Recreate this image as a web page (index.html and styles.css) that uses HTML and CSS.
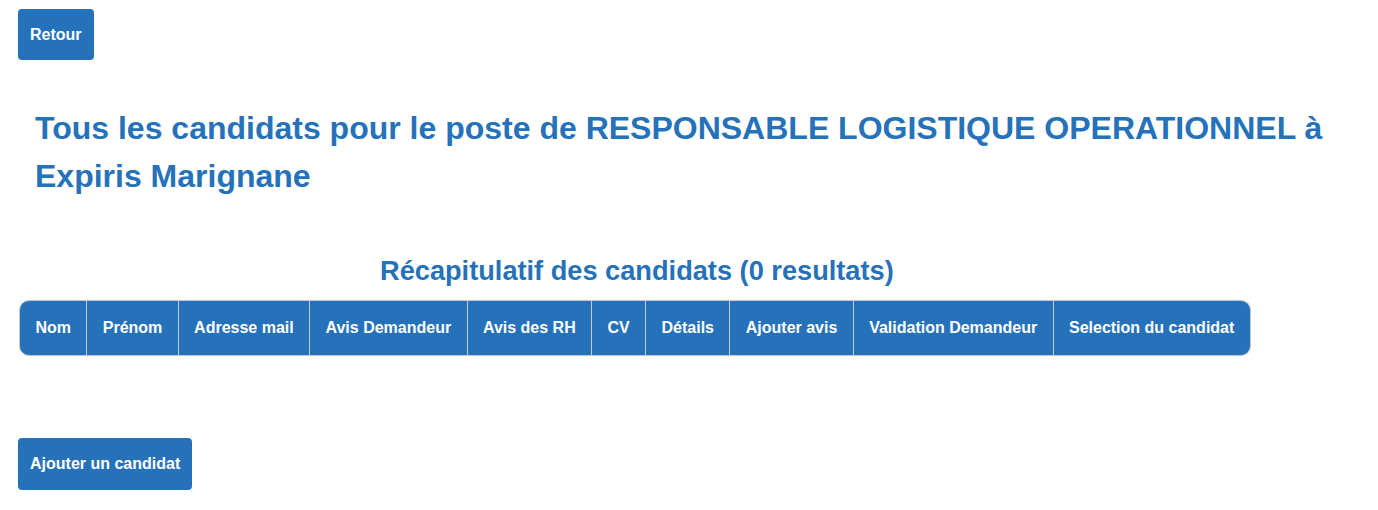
FILE: index.html
```html
<!DOCTYPE html>
<html lang="fr">
<head>
<meta charset="utf-8">
<title>Candidats</title>
<link rel="stylesheet" href="styles.css">
</head>
<body>
<div class="page">
  <div class="top"><button class="btn">Retour</button></div>
  <h1 class="title">Tous les candidats pour le poste de RESPONSABLE LOGISTIQUE OPERATIONNEL à Expiris Marignane</h1>
  <div class="table-wrap">
    <table class="recap">
      <caption>Récapitulatif des candidats (0 resultats)</caption>
      <thead>
        <tr>
          <th>Nom</th>
          <th>Prénom</th>
          <th>Adresse mail</th>
          <th>Avis Demandeur</th>
          <th>Avis des RH</th>
          <th>CV</th>
          <th>Détails</th>
          <th>Ajouter avis</th>
          <th>Validation Demandeur</th>
          <th>Selection du candidat</th>
        </tr>
      </thead>
    </table>
  </div>
  <div class="bottom"><button class="btn">Ajouter un candidat</button></div>
</div>
</body>
</html>
```

FILE: styles.css
```css
html, body {
  margin: 0;
  padding: 0;
  background: #fff;
}
body {
  font-family: "Liberation Sans", Arial, sans-serif;
}
.page {
  padding: 9px 18px 0 18px;
}
.btn {
  background: #2672ba;
  color: #fff;
  border: none;
  border-radius: 4px;
  font-family: "Liberation Sans", Arial, sans-serif;
  font-weight: bold;
  font-size: 16px;
  height: 51px;
  padding: 0 12px;
  cursor: pointer;
}
.title {
  color: #2672ba;
  font-size: 32px;
  font-weight: bold;
  line-height: 48px;
  margin: 44px 0 0 17px;
}
.table-wrap {
  margin-top: 55px;
}
.recap {
  border-collapse: separate;
  border-spacing: 0;
  margin-left: 1px;
}
.recap caption {
  color: #2672ba;
  font-size: 27.2px;
  font-weight: bold;
  padding: 0 0 13px 4px;
}
.recap th {
  background: #2672ba;
  color: #fff;
  font-size: 16px;
  font-weight: bold;
  height: 54px;
  padding: 0 15.4px;
  border-top: 1px solid #c8c8c8;
  border-bottom: 1px solid #c8c8c8;
  border-right: 1px solid #c8c8c8;
  white-space: nowrap;
}
.recap th:first-child {
  border-left: 1px solid #c8c8c8;
  border-radius: 10px 0 0 10px;
}
.recap th:last-child {
  border-radius: 0 10px 10px 0;
}
.bottom {
  margin-top: 82px;
}
.bottom .btn {
  height: 52px;
}
```
